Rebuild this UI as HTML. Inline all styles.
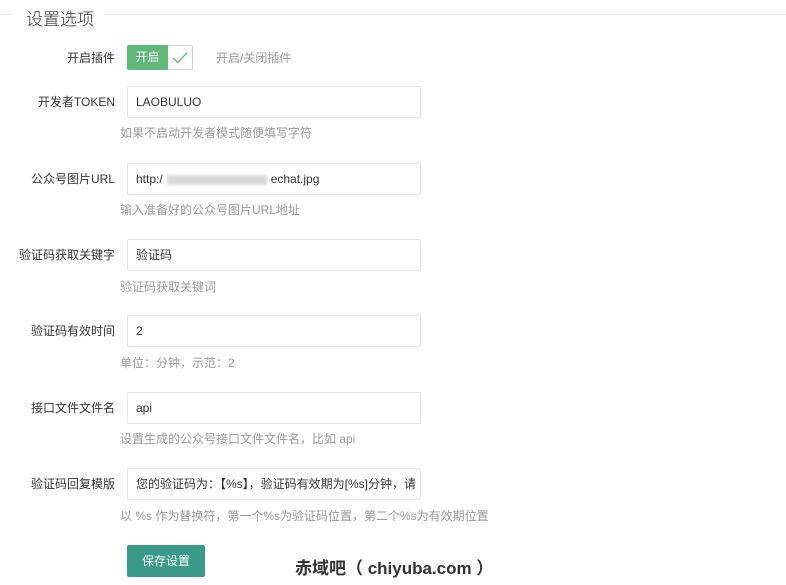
<!DOCTYPE html>
<html><head><meta charset="utf-8"><style>
*{margin:0;padding:0;box-sizing:border-box}
body{width:786px;height:585px;background:#fff;font-family:"Liberation Sans","Noto Sans CJK SC",sans-serif;font-size:12px;color:#333;position:relative;overflow:hidden}
.line{position:absolute;top:14px;height:1px;background:#e6e6e6}
.title{position:absolute;left:26px;top:5px;font-size:17px;color:#333;font-weight:300}
.lab{position:absolute;left:0;width:115px;text-align:right;font-size:12px;color:#333}
.inp{position:absolute;left:127px;width:294px;height:32px;border:1px solid #e6e6e6;border-radius:2px;padding-left:8px;line-height:30px;font-size:12px;color:#333;white-space:nowrap;overflow:hidden}
.help{position:absolute;left:120px;font-size:12px;color:#999}
.sw{position:absolute;left:127px;top:45px;width:66px;height:25px;border:1px solid #d2d2d2;border-radius:2px}
.sw .g{position:absolute;left:-1px;top:-1px;width:41px;height:25px;background:#5fb878;color:#fff;line-height:25px;text-align:center;font-size:12px;border-radius:2px 0 0 2px}
.btn{position:absolute;left:127px;top:545px;width:78px;height:32px;background:#399a89;color:#fff;border-radius:2px;text-align:center;line-height:32px;font-size:12px}
.wm{position:absolute;left:295px;top:554px;font-size:17px;font-weight:bold;color:#333;letter-spacing:0}
.blur{display:inline-block;height:10px;background:#d8d8d8;vertical-align:middle;filter:blur(1.5px)}
</style></head><body>
<div class="line" style="left:0;width:14px"></div>
<div class="line" style="left:104px;width:682px"></div>
<div class="title">设置选项</div>

<div class="lab" style="top:49px">开启插件</div>
<div class="sw"><div class="g">开启</div>
<svg style="position:absolute;left:44px;top:5px" width="16" height="13" viewBox="0 0 16 13"><path d="M1 7 L6 11.5 L15 1.5" fill="none" stroke="#5fb878" stroke-width="1.3"/></svg></div>
<div class="help" style="left:216px;top:49px">开启/关闭插件</div>

<div class="lab" style="top:93px">开发者TOKEN</div>
<div class="inp" style="top:86px">LAOBULUO</div>
<div class="help" style="top:124px">如果不启动开发者模式随便填写字符</div>

<div class="lab" style="top:170px">公众号图片URL</div>
<div class="inp" style="top:163px">http:/<span class="blur" style="width:100px;margin:0 4px"></span>echat.jpg</div>
<div class="help" style="top:201px">输入准备好的公众号图片URL地址</div>

<div class="lab" style="top:246px">验证码获取关键字</div>
<div class="inp" style="top:239px">验证码</div>
<div class="help" style="top:278px">验证码获取关键词</div>

<div class="lab" style="top:322px">验证码有效时间</div>
<div class="inp" style="top:315px">2</div>
<div class="help" style="top:354px">单位：分钟，示范：2</div>

<div class="lab" style="top:399px">接口文件文件名</div>
<div class="inp" style="top:392px">api</div>
<div class="help" style="top:430px">设置生成的公众号接口文件文件名，比如 api</div>

<div class="lab" style="top:475px">验证码回复模版</div>
<div class="inp" style="top:468px">您的验证码为：【%s】，验证码有效期为[%s]分钟，请</div>
<div class="help" style="top:507px">以 %s 作为替换符，第一个%s为验证码位置，第二个%s为有效期位置</div>

<div class="btn">保存设置</div>
<div class="wm">赤域吧（ chiyuba.com ）</div>
</body></html>
